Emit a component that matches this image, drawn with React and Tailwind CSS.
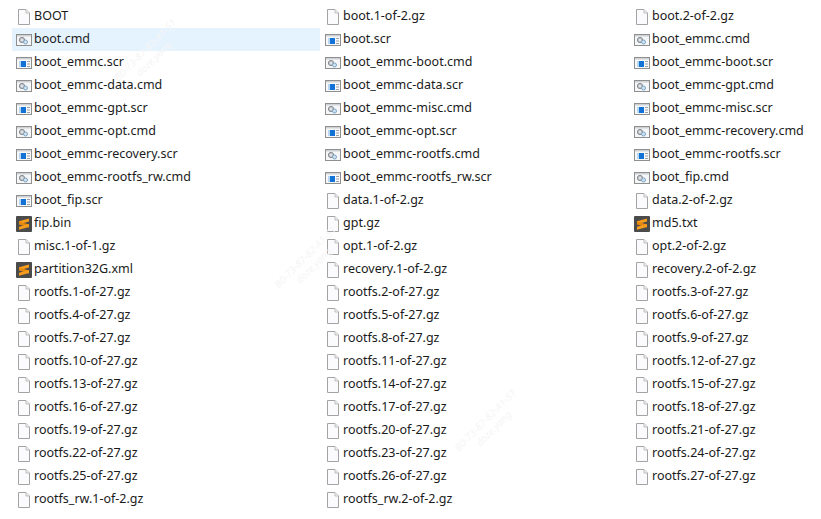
const columns = [
  [
    'BOOT', 'boot.cmd', 'boot_emmc.scr', 'boot_emmc-data.cmd', 'boot_emmc-gpt.scr', 'boot_emmc-opt.cmd',
    'boot_emmc-recovery.scr', 'boot_emmc-rootfs_rw.cmd', 'boot_fip.scr', 'fip.bin', 'misc.1-of-1.gz', 'partition32G.xml',
    'rootfs.1-of-27.gz', 'rootfs.4-of-27.gz', 'rootfs.7-of-27.gz', 'rootfs.10-of-27.gz', 'rootfs.13-of-27.gz',
    'rootfs.16-of-27.gz', 'rootfs.19-of-27.gz', 'rootfs.22-of-27.gz', 'rootfs.25-of-27.gz', 'rootfs_rw.1-of-2.gz',
  ],
  [
    'boot.1-of-2.gz', 'boot.scr', 'boot_emmc-boot.cmd', 'boot_emmc-data.scr', 'boot_emmc-misc.cmd', 'boot_emmc-opt.scr',
    'boot_emmc-rootfs.cmd', 'boot_emmc-rootfs_rw.scr', 'data.1-of-2.gz', 'gpt.gz', 'opt.1-of-2.gz', 'recovery.1-of-2.gz',
    'rootfs.2-of-27.gz', 'rootfs.5-of-27.gz', 'rootfs.8-of-27.gz', 'rootfs.11-of-27.gz', 'rootfs.14-of-27.gz',
    'rootfs.17-of-27.gz', 'rootfs.20-of-27.gz', 'rootfs.23-of-27.gz', 'rootfs.26-of-27.gz', 'rootfs_rw.2-of-2.gz',
  ],
  [
    'boot.2-of-2.gz', 'boot_emmc.cmd', 'boot_emmc-boot.scr', 'boot_emmc-gpt.cmd', 'boot_emmc-misc.scr', 'boot_emmc-recovery.cmd',
    'boot_emmc-rootfs.scr', 'boot_fip.cmd', 'data.2-of-2.gz', 'md5.txt', 'opt.2-of-2.gz', 'recovery.2-of-2.gz',
    'rootfs.3-of-27.gz', 'rootfs.6-of-27.gz', 'rootfs.9-of-27.gz', 'rootfs.12-of-27.gz', 'rootfs.15-of-27.gz',
    'rootfs.18-of-27.gz', 'rootfs.21-of-27.gz', 'rootfs.24-of-27.gz', 'rootfs.27-of-27.gz',
  ],
]

function BlankIcon() {
  return (
    <svg width="16" height="16" viewBox="0 0 16 16">
      <path d="M2.5 0.5h7.5l3.5 3.5v11.5h-11z" fill="#fbfbfd" stroke="#a3a3a3" />
      <path d="M10 0.5v3.5h3.5" fill="#f2f2f2" stroke="#bdbdbd" />
    </svg>
  )
}

function CmdIcon() {
  return (
    <svg width="16" height="16" viewBox="0 0 16 16">
      <rect x="0.5" y="2.5" width="15" height="11" fill="#f4f6f8" stroke="#8f8f8f" />
      <rect x="1" y="3" width="14" height="1.5" fill="#cfd2d5" />
      <circle cx="6" cy="8" r="2.6" fill="#c4c8cc" stroke="#858b90" />
      <circle cx="6" cy="8" r="0.9" fill="#eef0f2" />
      <circle cx="9.5" cy="10" r="2" fill="#cfe3f2" stroke="#7fa6c4" />
    </svg>
  )
}

function ScrIcon() {
  return (
    <svg width="16" height="16" viewBox="0 0 16 16">
      <rect x="0.5" y="2.5" width="15" height="11" fill="#f7f8f9" stroke="#8f8f8f" />
      <rect x="1" y="3" width="14" height="1.5" fill="#cfd2d5" />
      <rect x="5" y="6" width="5" height="6" fill="#1272d6" />
      <rect x="3" y="6" width="2" height="6" fill="#b9d6f2" />
      <path d="M11 6.5h3M11 9h3M11 11.5h3" stroke="#9aa0a6" />
    </svg>
  )
}

function SublimeIcon() {
  return (
    <svg width="16" height="16" viewBox="0 0 16 16">
      <rect x="0" y="0" width="16" height="16" rx="1" fill="#4b4b4b" />
      <path d="M3 5.2 13 2.4v3L3 8.2z" fill="#f89d1c" />
      <path d="M3 5.6 13 8.4v3L3 8.6z" fill="#e8890f" />
      <path d="M3 10.8 13 8v3L3 13.8z" fill="#f89d1c" />
    </svg>
  )
}

function iconFor(name) {
  if (name.endsWith('.cmd')) return <CmdIcon />
  if (name.endsWith('.scr')) return <ScrIcon />
  if (name === 'fip.bin' || name === 'md5.txt' || name === 'partition32G.xml') return <SublimeIcon />
  return <BlankIcon />
}

// faint watermark stamp, one per spot on the canvas
function Stamp({ className }) {
  return (
    <div className={`absolute -rotate-45 text-center text-[10px] italic leading-[12px] whitespace-pre text-[#f5f5f5] ${className}`}>
      {'B0-73-87-82-A1-51\ndoze.yang'}
    </div>
  )
}

function App() {
  return (
    <div className="relative h-[519px] w-[821px] overflow-hidden bg-white pt-[5px] pl-[12px] font-['Noto_Sans',sans-serif] text-[12.5px] text-[#1b1b1b]">
      <div className="flex gap-px">
        {columns.map((files, i) => (
          <div key={i} className="w-[308px] shrink-0">
            {files.map((name) => (
              <div
                key={name}
                className={`flex h-[23px] items-center gap-[2px] pl-1 ${name === 'boot.cmd' ? 'bg-[#e5f3ff]' : ''}`}
              >
                {iconFor(name)}
                <span className="whitespace-nowrap">{name}</span>
              </div>
            ))}
          </div>
        ))}
      </div>
      <Stamp className="top-[42px] left-[108px]" />
      <Stamp className="top-[249px] left-[268px]" />
      <Stamp className="top-[412px] left-[448px]" />
    </div>
  )
}

export default App
